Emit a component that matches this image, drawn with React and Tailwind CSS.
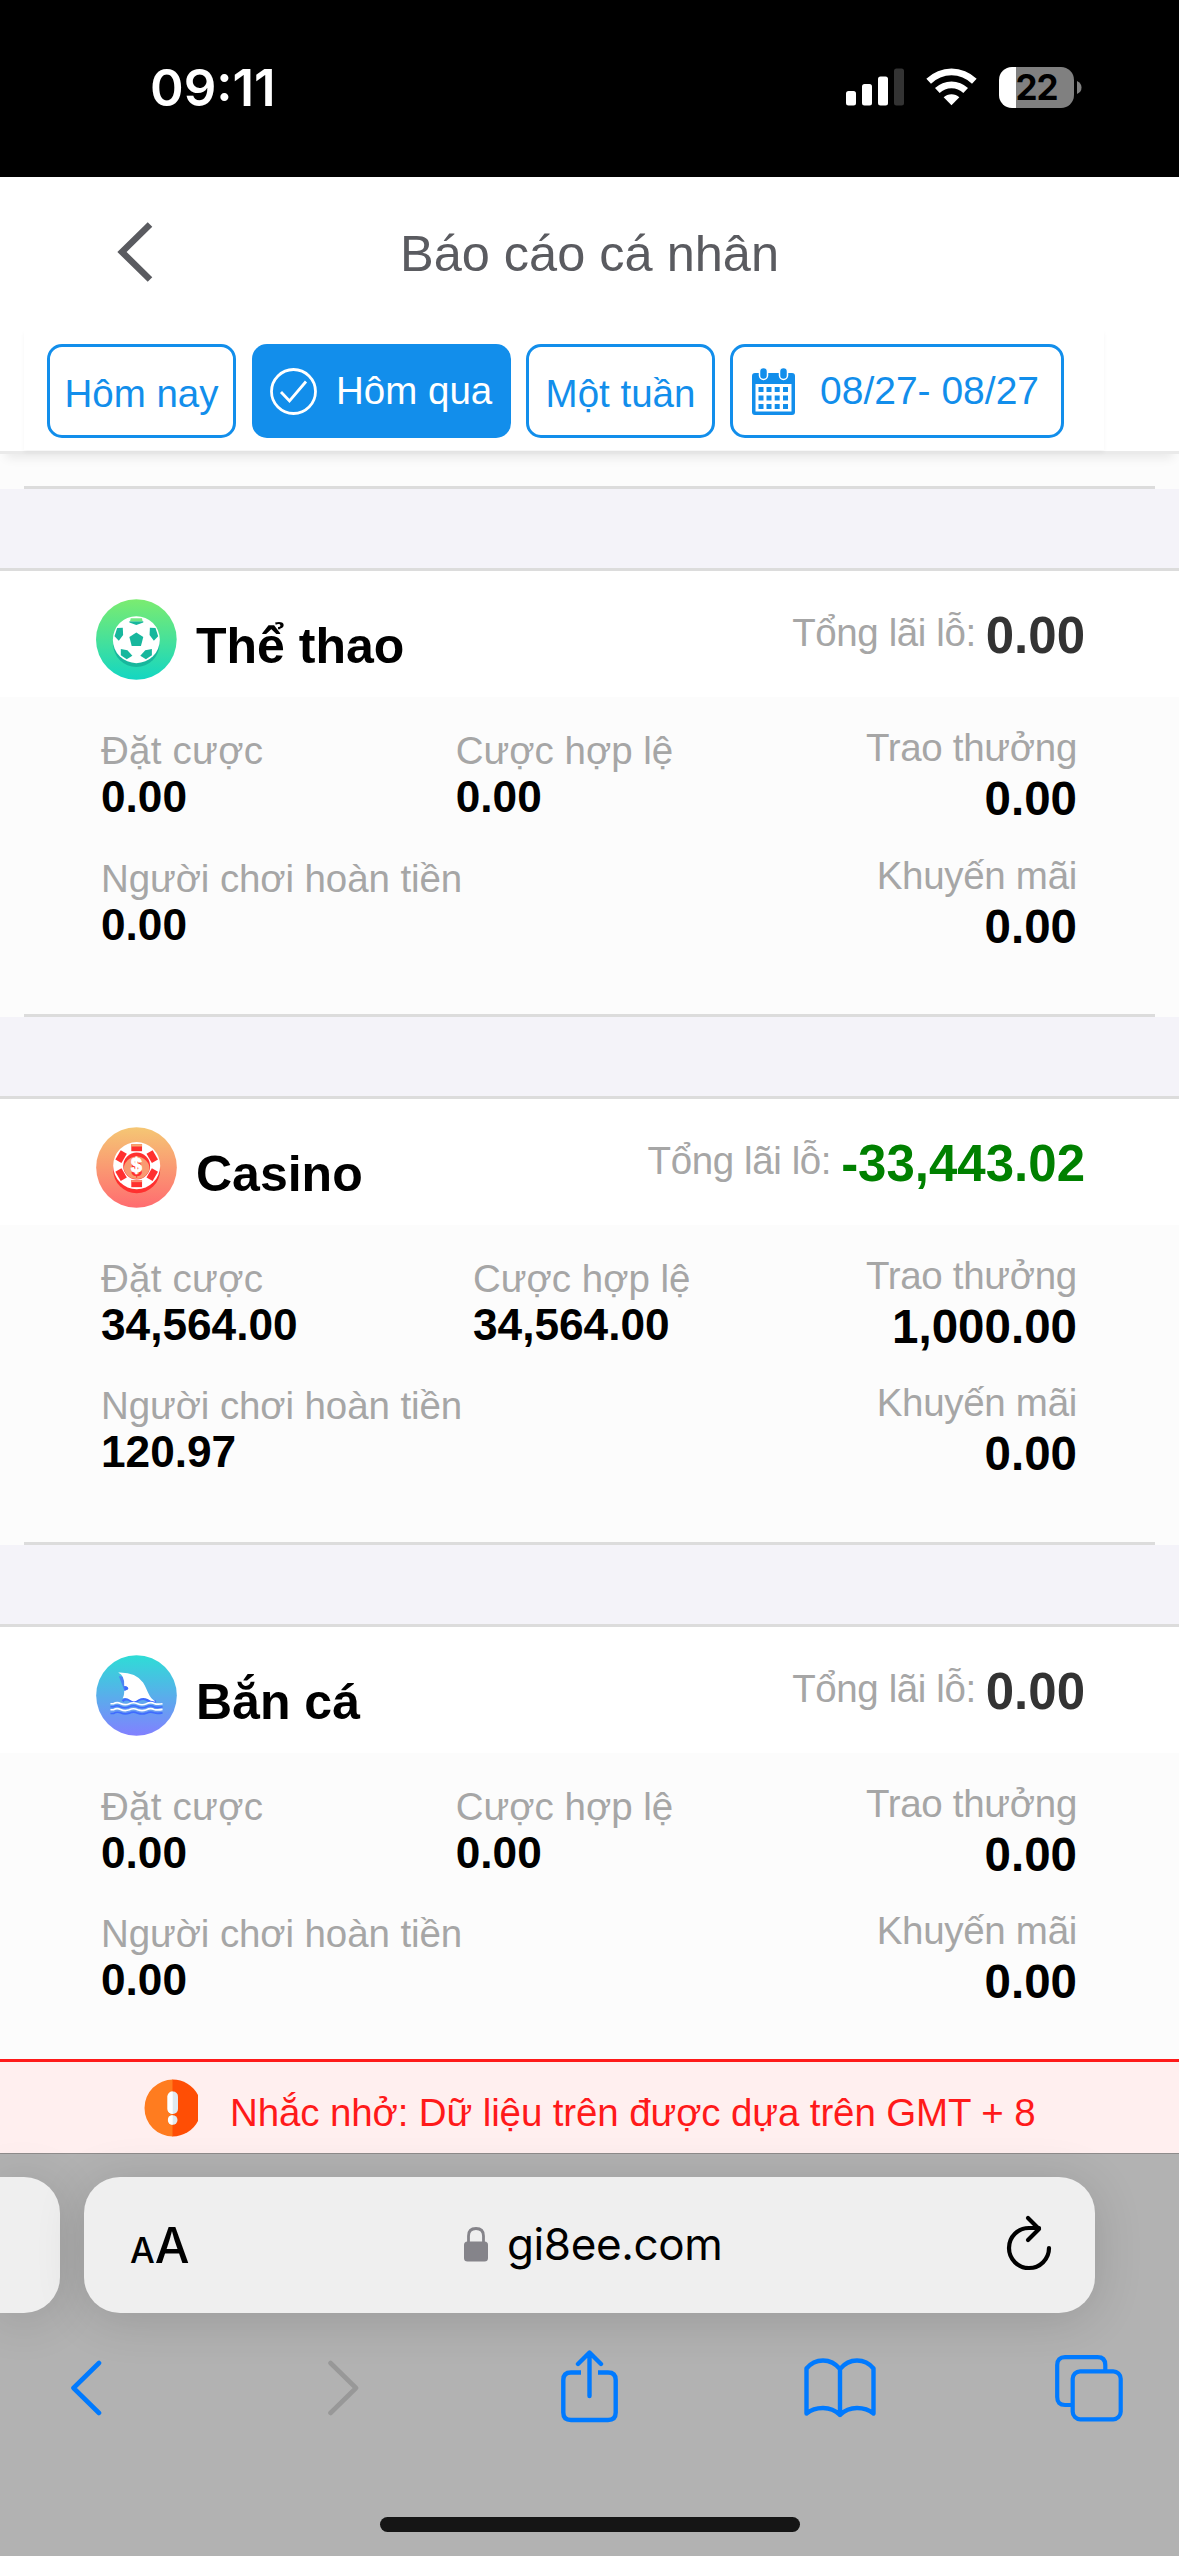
import React from "react";

function SignalIcon() {
  return (
    <svg className="h-[38px] w-[58px]" viewBox="0 0 58 38">
      <rect x="0" y="23" width="10" height="14.5" rx="2.5" fill="#fff" />
      <rect x="16" y="16" width="10" height="21.5" rx="2.5" fill="#fff" />
      <rect x="32" y="8.500" width="10" height="29" rx="2.5" fill="#fff" />
      <rect x="48" y="0.5" width="10" height="37" rx="2.5" fill="#333" />
    </svg>
  );
}

function WifiIcon() {
  return (
    <svg className="ml-[22px] h-[38px] w-[51px]" viewBox="288 56 153 114" fill="#fff">
      <path d="M289 88 A109 109 0 0 1 440 88 L426 103 A88 88 0 0 0 303 103 Z" />
      <path d="M315 116 A72 72 0 0 1 414 116 L400 131 A51 51 0 0 0 329 131 Z" />
      <path d="M341 144 A34 34 0 0 1 388 144 L364.500 168 Z" />
    </svg>
  );
}

function SoccerIcon() {
  return (
    <svg className="size-[81px]" viewBox="28 25 245 245">
      <defs>
        <linearGradient id="soccer" x1="0" y1="0" x2="0" y2="1">
          <stop offset="0" stopColor="#7bec70" />
          <stop offset="1" stopColor="#13d6c2" />
        </linearGradient>
      </defs>
      <circle cx="150" cy="147.500" r="122" fill="url(#soccer)" />
      <circle cx="150" cy="161" r="70" fill="#17b79d" />
      <circle cx="150" cy="148" r="71" fill="#fff" />
      <g fill="#17b79d">
        <path d="M150 126 L171 140 L164 167 H136 L129 140 Z" />
        <path d="M129 92 H171 V96 L150 104 L129 96 Z" />
        <path d="M92 113 L109 112 L110 134 L97 151 L84 138 Z" />
        <path d="M208 113 L191 112 L190 134 L203 151 L216 138 Z" />
        <path d="M103 176 L123 180 L138 197 L121 207 L103 195 Z" />
        <path d="M197 176 L177 180 L162 197 L179 207 L197 195 Z" />
      </g>
      <path d="M133 83 H167 L169 92 H131 Z" fill="#72e983" />
    </svg>
  );
}

function CasinoIcon() {
  return (
    <svg className="size-[81px]" viewBox="108 81 241 241">
      <defs>
        <linearGradient id="casino" x1="0" y1="0" x2="0" y2="1">
          <stop offset="0" stopColor="#f5c774" />
          <stop offset="1" stopColor="#ff6c70" />
        </linearGradient>
        <clipPath id="chipCore">
          <circle cx="229" cy="197" r="39" />
        </clipPath>
      </defs>
      <circle cx="228.500" cy="201.500" r="120" fill="url(#casino)" />
      <circle cx="229" cy="208" r="70" fill="#ff302f" />
      <circle cx="229" cy="196" r="70" fill="#fff" />
      <g fill="#ff302f">
        {[0, 60, 120, 180, 240, 300].map((a) => (
          <rect key={a} x="213" y="132" width="32" height="21" transform={`rotate(${a} 229 196)`} />
        ))}
      </g>
      <rect x="213" y="132" width="32" height="7" fill="#f6a871" />
      <rect x="213" y="239" width="32" height="6" fill="#fb8a70" />
      <circle cx="229" cy="197" r="40" fill="#ff302f" />
      <circle cx="229" cy="208" r="39" fill="#f99a71" clipPath="url(#chipCore)" />
      <g fontFamily="Liberation Sans, sans-serif" fontWeight="700" fontSize="58" textAnchor="middle">
        <text x="229" y="226" fill="#ff302f">$</text>
        <text x="228" y="215" fill="#fff" stroke="#fff" strokeWidth="3">$</text>
      </g>
    </svg>
  );
}

function SharkIcon() {
  return (
    <svg className="size-[81px]" viewBox="108 75 241 241">
      <defs>
        <linearGradient id="shark" x1="0" y1="0" x2="0" y2="1">
          <stop offset="0" stopColor="#2eddd6" />
          <stop offset="1" stopColor="#8280ff" />
        </linearGradient>
      </defs>
      <circle cx="228.500" cy="195.500" r="120" fill="url(#shark)" />
      <path d="M176 138 L196 140 V165 Q204 168 204 175 Q203 181 193 182 Z" fill="#4a84f3" />
      <path
        d="M187 212 Q198 202 211 211 Q223 219 236 208 Q251 201 264 211 Q276 216 286 212"
        fill="none"
        stroke="#3f6bff"
        strokeWidth="7"
      />
      <path
        d="M174 127 Q226 125 248 157 C262 178 264 203 285 213 Q271 214 262 206 Q247 200 235 207 Q222 218 210 209 Q199 200 187 204 Q192 197 192 181 Q204 180 204 175 Q203 168 192 167 Q194 136 174 127 Z"
        fill="#fff"
      />
      <path d="M193 168 Q204 169 204 175 Q203 180 193 181 Z" fill="#3f6bff" />
      <g fill="none">
        <path d="M151 229 H160 Q170 223 181 229 Q194 235 207 229 Q219 223 232 229 Q245 235 258 229 Q270 223 281 229 Q290 233 306 229 M151 249 H160 Q170 243 181 247 Q194 253 207 248 Q219 242 232 248 Q245 253 258 248 Q270 242 281 247 Q290 250 306 247" stroke="#3f6bff" strokeWidth="5" />
        <path d="M151 220 H160 Q170 214 181 219 Q194 226 207 220 Q219 214 232 220 Q245 226 258 220 Q270 214 281 219 Q290 223 306 220 M151 238 H160 Q170 232 181 237 Q194 243 207 238 Q219 232 232 238 Q245 243 258 238 Q270 232 281 237 Q290 240 306 237" stroke="#fff" strokeWidth="5" />
      </g>
    </svg>
  );
}

function CalendarIcon() {
  return (
    <svg className="h-[47px] w-[43px]" viewBox="0 0 43 47">
      <path d="M3 5 H40 Q43 5 43 8 V44 Q43 47 40 47 H3 Q0 47 0 44 V8 Q0 5 3 5 Z M3.500 16 V43.500 H39.500 V16 Z" fill="#128eeb" fillRule="evenodd" />
      <g fill="#128eeb" stroke="#fff" strokeWidth="1.500">
        <rect x="7.500" y="-0.5" width="8" height="12" rx="4" />
        <rect x="27.500" y="-0.5" width="8" height="12" rx="4" />
      </g>
      {[19, 27.500, 36].map((y) =>
        [6.500, 14.500, 22.700, 31].map((x) => (
          <rect key={`${x}-${y}`} x={x} y={y} width="5" height="5" fill="#128eeb" />
        ))
      )}
    </svg>
  );
}

function WarningIcon() {
  return (
    <svg className="h-[58px] w-[54px]" viewBox="0 0 54 58">
      <path d="M29 0.500 A28.500 28.500 0 0 0 29 57.500 Z" fill="#ff7c1f" />
      <path d="M28.500 0.500 A28.500 28.500 0 0 1 54 16 V42 A28.500 28.500 0 0 1 28.500 57.500 Z" fill="#ff4e05" />
      <rect x="23.500" y="12.500" width="10.500" height="22.500" rx="5" fill="#dfe9ef" />
      <path d="M28.700 12.500 A5 5 0 0 0 23.500 17.500 V30 A5 5 0 0 0 28.700 35 Z" fill="#fff" />
      <circle cx="28.700" cy="41" r="4.800" fill="#dfe9ef" />
      <path d="M28.700 36.200 A4.800 4.800 0 0 0 28.700 45.800 Z" fill="#fff" />
    </svg>
  );
}

const sections = [
  {
    name: "Thể thao",
    Icon: SoccerIcon,
    total: "0.00",
    totalColor: "text-[#333]",
    bet: "0.00",
    valid: "0.00",
    payout: "0.00",
    rebate: "0.00",
    promo: "0.00",
    gap: "mt-[26px]",
  },
  {
    name: "Casino",
    Icon: CasinoIcon,
    total: "-33,443.02",
    totalColor: "text-[#008000]",
    bet: "34,564.00",
    valid: "34,564.00",
    payout: "1,000.00",
    rebate: "120.97",
    promo: "0.00",
    gap: "mt-[25px]",
  },
  {
    name: "Bắn cá",
    Icon: SharkIcon,
    total: "0.00",
    totalColor: "text-[#333]",
    bet: "0.00",
    valid: "0.00",
    payout: "0.00",
    rebate: "0.00",
    promo: "0.00",
    gap: "mt-[25px]",
  },
];

function Stat({ label, value, tracking = "tracking-normal" }) {
  return (
    <div className="pt-[6px] leading-[46px]">
      <div className={`text-[38.5px] text-[#a6a6a6] ${tracking}`}>{label}</div>
      <div className="text-[44.2px] font-bold text-black">{value}</div>
    </div>
  );
}

function RightStat({ label, value }) {
  return (
    <div className="text-right leading-[51px]">
      <div className="text-[38.5px] tracking-[-0.3px] text-[#a6a6a6]">{label}</div>
      <div className="text-[47.5px] font-bold text-black">{value}</div>
    </div>
  );
}

function Divider() {
  return (
    <>
      <div className="bg-[#fcfcfc] px-6">
        <div className="h-[3px] bg-[#dcdcdc]" />
      </div>
      <div className="h-[79px] bg-[#f4f3f9]" />
    </>
  );
}

function Section({ data }) {
  const { Icon } = data;
  return (
    <section>
      <div className="flex h-[129px] items-start justify-between border-t-[3px] border-[#dcdcdc] bg-white pr-[94px] pl-[96px]">
        <div className="flex pt-[28px]">
          <Icon />
          <h2 className="mt-[7px] ml-[19px] text-[50px] leading-[81px] font-bold text-black">{data.name}</h2>
        </div>
        <div className="flex pt-[32px] leading-[60px]">
          <span className="text-[38.5px] tracking-[-0.4px] text-[#a6a6a6]">Tổng lãi lỗ:</span>
          <span className={`mt-[3px] ml-[10px] text-[51px] font-bold ${data.totalColor}`}>{data.total}</span>
        </div>
      </div>
      <div className="h-[317px] bg-[#fcfcfc] pt-[25px] pr-[102px] pl-[101px]">
        <div className="flex justify-between">
          <Stat label="Đặt cược" value={data.bet} tracking="tracking-[0.25px]" />
          <Stat label="Cược hợp lệ" value={data.valid} />
          <RightStat label="Trao thưởng" value={data.payout} />
        </div>
        <div className={`-mt-px flex justify-between ${data.gap}`}>
          <Stat label="Người chơi hoàn tiền" value={data.rebate} tracking="tracking-[-0.1px]" />
          <RightStat label="Khuyến mãi" value={data.promo} />
        </div>
      </div>
      <Divider />
    </section>
  );
}

function StatusBar() {
  return (
    <div className="flex h-[177px] shrink-0 items-start justify-between bg-black pr-[97px] pl-[150px]">
      <div className="pt-[58px] font-['Inter'] text-[51px] leading-[60px] font-semibold text-white">09:11</div>
      <div className="flex pt-[67px]">
        <div className="flex pt-[1px]">
          <SignalIcon />
          <WifiIcon />
        </div>
        <div className="ml-[22px] flex h-[41px] w-[75px] items-center justify-center rounded-[13px] bg-[linear-gradient(to_right,#fff_17px,#808080_17px)] font-['Inter'] text-[35px] leading-[41px] font-bold tracking-[-1px] text-black">
          22
        </div>
        <svg className="mt-[14px] ml-[3px] h-[13px] w-[5px]" viewBox="0 0 5 13">
          <path d="M0 0 Q4.500 2 4.500 6.500 Q4.500 11 0 13 Z" fill="#808080" />
        </svg>
      </div>
    </div>
  );
}

function Filters() {
  return (
    <div className="relative z-10 h-[124px] shrink-0 border-b-[3px] border-[#eaeaea] bg-white px-6 shadow-[0_10px_10px_-6px_rgba(0,0,0,0.08)]">
      <div className="flex h-[120px] w-[1080px] bg-white pt-[14px] pl-[23px] text-[38.5px] leading-[88px] text-[#128eeb] shadow-[0_3px_4px_rgba(0,0,0,0.04)]">
        <button className="h-[94px] w-[189px] rounded-[15px] border-[3px] border-[#128eeb] pt-[3px]">Hôm nay</button>
        <button className="ml-4 flex h-[94px] w-[259px] items-center rounded-[15px] bg-[#128eeb] pl-[18px] text-white">
          <svg className="h-[47px] w-[47px]" viewBox="0 0 47 47" fill="none" stroke="#fff" strokeWidth="2.800">
            <circle cx="23.500" cy="23.500" r="22" />
            <path d="M11 24 L19.500 33 L36 13.500" />
          </svg>
          <span className="-mt-px ml-[19px]">Hôm qua</span>
        </button>
        <button className="ml-[15px] h-[94px] w-[189px] rounded-[15px] border-[3px] border-[#128eeb] pt-[3px]">Một tuần</button>
        <button className="ml-[15px] flex h-[94px] w-[334px] items-center rounded-[15px] border-[3px] border-[#128eeb] pl-[19px]">
          <CalendarIcon />
          <span className="-mt-px ml-[25px] text-[39px]">08/27- 08/27</span>
        </button>
      </div>
    </div>
  );
}

function BrowserBar() {
  return (
    <div className="relative flex h-[403px] shrink-0 flex-col border-t border-[#8f8c8c] bg-[#b2b2b2]">
      <div className="mt-[23px] flex h-[136px]">
        <div className="w-[60px] rounded-r-[36px] bg-[#efefef] shadow-[0_6px_50px_rgba(0,0,0,0.14)]" />
        <div className="ml-6 flex w-[1011px] items-center rounded-[36px] bg-[#efefef] pr-[43px] pl-[46px] font-['Inter'] text-black shadow-[0_6px_50px_rgba(0,0,0,0.14)]">
          <div className="mt-px flex w-[80px] items-baseline font-medium">
            <span className="text-[35px]">A</span>
            <span className="text-[49px]">A</span>
          </div>
          <svg className="mt-[-2px] ml-[254px] h-[35px] w-[24px]" viewBox="0 0 24 35">
            <path d="M4.500 16 V9 Q4.500 1.500 12 1.500 Q19.500 1.500 19.500 9 V16" fill="none" stroke="#85848a" strokeWidth="2.800" />
            <rect x="0" y="14.500" width="24" height="20" rx="3.500" fill="#85848a" />
          </svg>
          <span className="-mt-[2px] ml-[19px] text-[44px] leading-[54px] tracking-[-0.4px]">gi8ee.com</span>
          <svg className="mt-[-4px] ml-auto h-[56px] w-[46px]" viewBox="0 0 46 56" fill="none" stroke="#000" strokeWidth="4.200" strokeLinecap="round" strokeLinejoin="round">
            <path d="M43 33 A20 20 0 1 1 23 13 H33" />
            <path d="M22 3 L33 14 L22 25" />
          </svg>
        </div>
      </div>
      <div className="mt-[36px] flex h-[74px] items-start pl-[70px]">
        <svg className="mt-[11px] h-[56px] w-[32px]" viewBox="0 0 32 56" fill="none" stroke="#007aff" strokeWidth="4.600" strokeLinecap="round" strokeLinejoin="round">
          <path d="M29 3 L3.500 28 L29 53" />
        </svg>
        <svg className="mt-[11px] ml-[225px] h-[56px] w-[32px]" viewBox="0 0 32 56" fill="none" stroke="#989898" strokeWidth="4.600" strokeLinecap="round" strokeLinejoin="round">
          <path d="M3.500 3 L29 28 L3.500 53" />
        </svg>
        <svg className="mt-[1px] ml-[202px] h-[73px] w-[57px]" viewBox="0 0 57 73" fill="none" stroke="#007aff" strokeWidth="4.400" strokeLinecap="round" strokeLinejoin="round">
          <path d="M28.500 46 V3 M17 14 L28.500 2.500 L40 14" />
          <path strokeLinecap="butt" d="M20 22.500 H10 Q2.300 22.500 2.300 30 V62.500 Q2.300 70 10 70 H47 Q54.700 70 54.700 62.500 V30 Q54.700 22.500 47 22.500 H37" />
        </svg>
        <svg className="mt-[9px] ml-[186px] h-[60px] w-[72px]" viewBox="0 0 72 60" fill="none" stroke="#007aff" strokeWidth="4.400" strokeLinecap="round" strokeLinejoin="round">
          <path d="M36 11 Q29 2.500 19 2.500 Q9 2.500 2.500 10.500 V55.500 Q9 50 19 50 Q29 50 36 57 Q43 50 53 50 Q63 50 69.500 55.500 V10.500 Q63 2.500 53 2.500 Q43 2.500 36 11 V57" />
        </svg>
        <svg className="mt-[6px] ml-[179px] h-[68px] w-[68px]" viewBox="0 0 68 68" fill="none" stroke="#007aff" strokeWidth="4.200">
          <path d="M16 50 H10 Q2.200 50 2.200 42 V10 Q2.200 2.200 10 2.200 H42.500 Q50.300 2.200 50.300 10 V15" />
          <rect x="17.700" y="16.300" width="48" height="48" rx="7.500" />
        </svg>
      </div>
      <div className="mx-auto mt-[94px] h-[15px] w-[420px] rounded-full bg-[#151515]" />
    </div>
  );
}

export default function App() {
  return (
    <div className="flex h-[2556px] w-[1179px] flex-col overflow-hidden bg-white font-['Liberation_Sans',Arial,sans-serif]">
      <StatusBar />
      <header className="grid h-[153px] shrink-0 grid-cols-[1fr_auto_1fr] items-center bg-white">
        <svg className="-mt-[3px] ml-[117px] h-[60px] w-[36px]" viewBox="0 0 36 60" fill="none" stroke="#5a5b60" strokeWidth="6.500">
          <path d="M33 2.500 L5 30 L33 57.500" />
        </svg>
        <h1 className="text-[50.5px] leading-[60px] text-[#5a5b60]">Báo cáo cá nhân</h1>
      </header>
      <Filters />
      <main className="h-[1605px] shrink-0 overflow-hidden">
        <div className="h-[32px] bg-[#fcfcfc]" />
        <Divider />
        {sections.map((s) => (
          <Section key={s.name} data={s} />
        ))}
      </main>
      <div className="flex h-[94px] shrink-0 items-start border-t-[3px] border-[#ff1a1a] bg-[#ffefef] pl-[144px]">
        <div className="pt-[17px]">
          <WarningIcon />
        </div>
        <p className="mt-[21px] ml-[32px] text-[38.5px] leading-[60px] tracking-[-0.12px] text-[#ff1a1a]">Nhắc nhở: Dữ liệu trên được dựa trên GMT + 8</p>
      </div>
      <BrowserBar />
    </div>
  );
}
